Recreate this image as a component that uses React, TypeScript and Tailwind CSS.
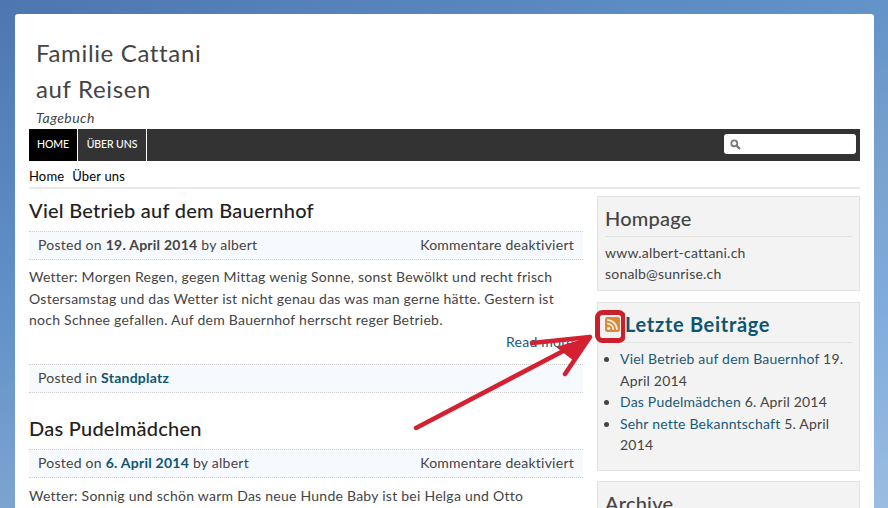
const font = "[font-family:Lato,'Noto_Sans',sans-serif]";

function MetaBar({ children }: { children: React.ReactNode }) {
  return (
    <div className="flex h-[29px] items-center justify-between border-y border-dotted border-[#cfcfcf] bg-[#f6f9fd] px-[9px] pb-[2px] text-[14px] tracking-[0.25px] text-[#444]">
      {children}
    </div>
  );
}

function Post({ title, date, children }: { title: string; date: React.ReactNode; children: React.ReactNode }) {
  return (
    <article>
      <h2 className="h-[30px] text-[20px] leading-[28px] font-medium tracking-[0.25px] text-[#222]">{title}</h2>
      <div className="mt-[5px]">
        <MetaBar>
          <span>Posted on {date} by albert</span>
          <span>Kommentare deaktiviert</span>
        </MetaBar>
      </div>
      {children}
    </article>
  );
}

function Widget({ children, className }: { children: React.ReactNode; className: string }) {
  return <section className={`border border-[#e2e2e2] bg-[#f3f3f3] px-[7px] ${className}`}>{children}</section>;
}

export default function App() {
  return (
    <div className={`${font} h-[508px] w-[888px] overflow-hidden bg-[linear-gradient(160deg,#4e76b0_0%,#6191c8_37%,#7ba3cf_60%,#7fabdd_75%,#9bbde0_100%)] pt-[14px] pl-[15px]`}>
      <div className="relative h-[494px] w-[859px] rounded-t-[3px] bg-white px-[14px]">
        <header className="pt-[21px] pl-[7px] text-[#444]">
          <h1 className="text-[24px] leading-[36px] tracking-[0.65px]">Familie Cattani<br />auf Reisen</h1>
          <p className="text-[14px] leading-[22px] italic tracking-[0.45px]">Tagebuch</p>
        </header>
        <nav className="flex h-[32px] items-stretch justify-between bg-[#333] text-[10.5px] font-medium tracking-[-0.1px] text-white">
          <div className="flex">
            <a className="flex w-[49px] items-center justify-center border-r border-white bg-black">HOME</a>
            <a className="flex w-[69px] items-center justify-center border-r border-white">ÜBER UNS</a>
          </div>
          <div className="flex items-center pr-[4px] pb-[2px]">
            <div className="flex h-[20px] w-[132px] items-center rounded-[3px] bg-white pl-[6px]">
              <svg width="11" height="11" viewBox="0 0 11 11" fill="none" stroke="#777" strokeWidth="1.8"><circle cx="4.3" cy="4.3" r="3" /><path d="M6.6 6.6 10 10" strokeWidth="2.2" /></svg>
            </div>
          </div>
        </nav>
        <div className="flex h-[28px] gap-[8px] border-b-2 border-[#e8e8e8] pt-[7px] text-[13px] leading-[17px] tracking-[0.15px] text-black">
          <span>Home</span><span>Über uns</span>
        </div>
        <div className="flex justify-between pt-[7px]">
          <main className="w-[554px]">
            <Post title="Viel Betrieb auf dem Bauernhof" date={<b className="font-bold">19. April 2014</b>}>
              <p className="mt-[6px] text-[14px] leading-[21.5px] tracking-[0.25px] text-[#444]">
                Wetter: Morgen Regen, gegen Mittag wenig Sonne, sonst Bewölkt und recht frisch<br />
                Ostersamstag und das Wetter ist nicht genau das was man gerne hätte. Gestern ist<br />
                noch Schnee gefallen. Auf dem Bauernhof herrscht reger Betrieb.
              </p>
              <div className="h-[21px] pr-[9px] text-right text-[14px] leading-[21px] tracking-[0.25px] text-[#175a78]">Read more</div>
              <div className="mt-[12px]">
                <MetaBar><span>Posted in <b className="font-bold text-[#0f5570]">Standplatz</b></span></MetaBar>
              </div>
            </Post>
            <div className="mt-[21px]">
              <Post title="Das Pudelmädchen" date={<b className="font-bold text-[#0f5570]">6. April 2014</b>}>
                <p className="mt-[7px] text-[14px] leading-[21px] tracking-[0.25px] text-[#444]">Wetter: Sonnig und schön warm Das neue Hunde Baby ist bei Helga und Otto</p>
              </Post>
            </div>
          </main>
          <aside className="w-[263px] text-[14px] tracking-[0.2px] text-[#444]">
            <Widget className="h-[95px] pt-[9px]">
              <h3 className="border-b border-[#e2e2e2] pb-[6px] text-[20px] leading-[24px] font-medium">Hompage</h3>
              <p className="mt-[5px] leading-[21px]">www.albert-cattani.ch<br />sonalb@sunrise.ch</p>
            </Widget>
            <Widget className="mt-[11px] h-[169px] pt-[8px]">
              <h3 className="flex h-[32px] items-center gap-[5px] border-b border-[#e2e2e2] pb-[5px] text-[20px] font-bold tracking-[0.7px] text-[#0f5570]">
                <svg width="15" height="15" viewBox="0 0 14 14"><rect width="14" height="14" rx="2" fill="#d98a3c" /><circle cx="3.4" cy="10.6" r="1.5" fill="#fbeedd" /><path d="M2 6.2A5.8 5.8 0 0 1 7.8 12M2 2.8A9.2 9.2 0 0 1 11.2 12" fill="none" stroke="#fbeedd" strokeWidth="1.6" /></svg>
                Letzte Beiträge
              </h3>
              <ul className="mt-[5px] list-disc pl-[15px] leading-[21.5px] marker:text-[#444]">
                <li><a className="text-[#175a78]">Viel Betrieb auf dem Bauernhof</a> 19. April 2014</li>
                <li><a className="text-[#175a78]">Das Pudelmädchen</a> 6. April 2014</li>
                <li><a className="text-[#175a78]">Sehr nette Bekanntschaft</a> 5. April 2014</li>
              </ul>
            </Widget>
            <Widget className="mt-[10px] h-[60px] pt-[8px]">
              <h3 className="text-[20px] leading-[26px] font-medium">Archive</h3>
            </Widget>
          </aside>
        </div>
        <svg className="absolute top-[293px] left-[385px]" width="225" height="140" viewBox="0 0 225 140" fill="none">
          <rect x="197.5" y="5.5" width="26" height="28" rx="5" stroke="#c9202c" strokeWidth="5" />
          <path d="M16 121 190 30M132 36 190 30 165 67" stroke="#d42030" strokeWidth="4.5" strokeLinecap="round" strokeLinejoin="round" />
          <path d="M156 40 190 30 174 54Z" fill="#d42030" />
        </svg>
      </div>
    </div>
  );
}
